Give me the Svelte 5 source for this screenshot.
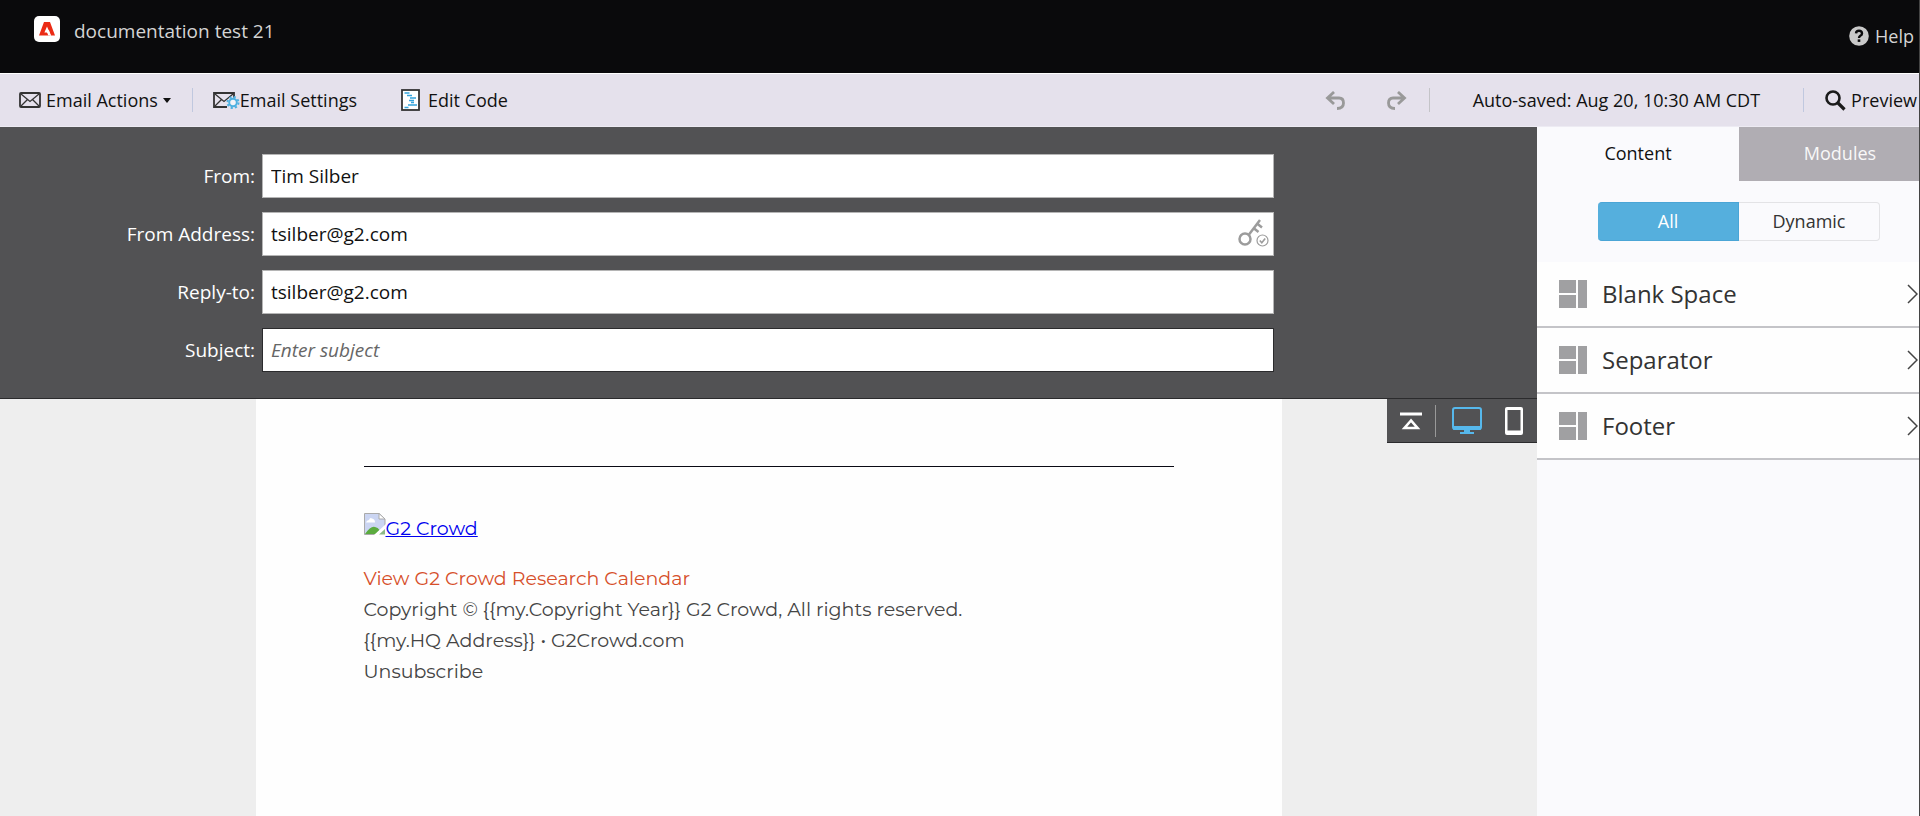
<script>
  let from = $state('Tim Silber');
  let address = $state('tsilber@g2.com');
  let reply = $state('tsilber@g2.com');
  let subject = $state('');
  const modules = ['Blank Space', 'Separator', 'Footer'];
</script>

<div class="app">
  <header class="top">
    <div class="brand">
      <svg width="26" height="26" viewBox="0 0 26 26" aria-hidden="true">
        <rect width="26" height="26" rx="5" fill="#fff" />
        <path fill="#eb2c16" d="M10 6h6l5 13.500h-4L14.700 13.500 12.700 17h2.600l1 2.500H5z" />
        <path fill="#fff" d="M13 10.500l3.800 9h-2.500l-1.200-2.900h-2.700z" />
      </svg>
      <h1>documentation test 21</h1>
    </div>
    <a class="help" href="#help">
      <svg width="20" height="20" viewBox="0 0 20 20" aria-hidden="true">
        <circle cx="10" cy="10" r="9.800" fill="#c9c9c9" />
        <path d="M7 7.400Q7.200 4.800 10 4.800T13 7.400Q13 8.800 11.300 9.800Q10 10.600 10 12" fill="none" stroke="#0a0a0c" stroke-width="2.400" />
        <rect x="8.700" y="13.400" width="2.600" height="2.500" fill="#0a0a0c" />
      </svg>
      Help
    </a>
  </header>

  <nav class="toolbar">
    <button class="tool actions">
      <svg width="22" height="16" viewBox="0 0 22 16" fill="none" stroke="#333" aria-hidden="true">
        <rect x="1" y="1" width="20" height="14" rx="1" stroke-width="1.800" />
        <path d="M2 2l9 7.500L20 2M2 14l6.500-6.500M20 14l-6.500-6.500" stroke-width="1.300" />
      </svg>
      Email Actions
      <svg class="caret" width="8" height="5" viewBox="0 0 8 5" aria-hidden="true"><path d="M0 0h8L4 5z" fill="#111" /></svg>
    </button>
    <span class="rule"></span>
    <button class="tool settings">
      <svg width="27" height="18" viewBox="0 0 27 18" fill="none" aria-hidden="true">
        <g stroke="#333">
          <path d="M14 16H1V2h20v5" stroke-width="1.800" />
          <path d="M2 3l9 7.500L20 3M2 15l6.500-6.500" stroke-width="1.300" />
        </g>
        <circle cx="20" cy="11.500" r="5" fill="#f4f3f8" />
        <circle cx="20" cy="11.500" r="5.500" stroke="#4fb0e0" stroke-width="2" stroke-dasharray="2.160 2.160" />
        <circle cx="20" cy="11.500" r="3.800" stroke="#4fb0e0" stroke-width="2" />
      </svg>
      Email Settings
    </button>
    <button class="tool code">
      <svg width="19" height="22" viewBox="0 0 19 22" fill="none" aria-hidden="true">
        <rect x="1" y="1" width="17" height="20" fill="#fff" stroke="#333" stroke-width="1.800" />
        <path d="M3.500 4h5M6 6.500h5M9 9h6M8 11.500h5M10 13.500h3M7 16h9M3.500 18.500h4" stroke="#35a4dc" stroke-width="1.400" />
      </svg>
      Edit Code
    </button>
    <button class="tool undo" aria-label="Undo">
      <svg width="20" height="19" viewBox="0 0 20 19" fill="none" stroke="#999" stroke-width="2.800" aria-hidden="true">
        <path d="M9 1L2.500 7L9 13M3 7H14Q18.500 7 18.500 12Q18.500 17.500 12 17.500" />
      </svg>
    </button>
    <button class="tool redo" aria-label="Redo">
      <svg width="20" height="19" viewBox="0 0 20 19" fill="none" stroke="#999" stroke-width="2.800" aria-hidden="true">
        <path d="M11 1l6.500 6L11 13M17 7H6Q1.500 7 1.500 12Q1.500 17.500 8 17.500" />
      </svg>
    </button>
    <span class="rule gray"></span>
    <span class="saved">Auto-saved: Aug 20, 10:30 AM CDT</span>
    <span class="rule"></span>
    <button class="tool preview">
      <svg width="21" height="21" viewBox="0 0 21 21" fill="none" stroke="#1b1b1b" aria-hidden="true">
        <circle cx="8" cy="8" r="6.500" stroke-width="2.600" />
        <path d="M12.500 12.500l7 7" stroke-width="3.200" />
      </svg>
      Preview
    </button>
  </nav>

  <div class="body">
    <main class="editor">
      <form class="fields">
        <label for="from">From:</label>
        <input id="from" type="text" bind:value={from} />
        <label for="address">From Address:</label>
        <div class="keyed">
          <input id="address" type="text" bind:value={address} />
          <svg class="key" width="31" height="28" viewBox="0 0 31 28" fill="none" stroke="#9c9c9c" aria-hidden="true">
            <circle cx="7" cy="20" r="5.500" stroke-width="2.500" />
            <path d="M11 15.500L22 1M19 4.500l5 4M15.500 9l5 4" stroke-width="2.500" />
            <circle cx="24.500" cy="21.500" r="5.500" stroke-width="1.200" />
            <path d="M21.800 21.500l2 2.200 3.400-4.200" stroke-width="1.600" />
          </svg>
        </div>
        <label for="reply">Reply-to:</label>
        <input id="reply" type="text" bind:value={reply} />
        <label for="subject">Subject:</label>
        <input id="subject" class="empty" type="text" placeholder="Enter subject" bind:value={subject} />
      </form>

      <section class="canvas">
        <article class="page">
          <hr />
          <p class="logo">
            <a href="#g2"><svg width="22" height="22" viewBox="0 0 22 22" aria-hidden="true">
                <path d="M.500 .500h14.500l6 5.500v7.500L13 21.500H.500z" fill="#cbd5f2" stroke="#aaa" />
                <path d="M15 .500V6h6z" fill="#fff" stroke="#aaa" />
                <path d="M2 9.500Q2.500 7 5 7Q6 4 8 5.500Q11 6 11 9.500z" fill="#fff" />
                <path d="M1 21Q7 12.500 11 14Q14 14.500 15.500 17L12 21z" fill="#5bab3f" />
                <path d="M10 22L22 11v4L14.500 22z" fill="#fff" />
                <path d="M15 21.500h6V16z" fill="#8cb986" />
              </svg><span>G2 Crowd</span></a>
          </p>
          <p>
            <a class="calendar" href="#calendar">View G2 Crowd Research Calendar</a><br />
            Copyright © {'{{my.Copyright Year}}'} G2 Crowd, All rights reserved.<br />
            {'{{my.HQ Address}}'} • G2Crowd.com<br />
            Unsubscribe
          </p>
        </article>
        <div class="views">
          <button aria-label="Collapse header">
            <svg width="22" height="18" viewBox="0 0 22 18" fill="none" stroke="#fff" aria-hidden="true">
              <path d="M0 2h22" stroke-width="3" />
              <path d="M11 8.500L4.500 16h13z" stroke-width="2.600" />
            </svg>
          </button>
          <span class="split"></span>
          <button aria-label="Desktop view">
            <svg width="30" height="27" viewBox="0 0 30 27" aria-hidden="true">
              <rect x="1" y="1" width="28" height="21" rx="2" fill="none" stroke="#56b8ec" stroke-width="2" />
              <path d="M1 19h28v3q0 1-1 1H2q-1 0-1-1zM12 23h6v2h4v2H8v-2h4z" fill="#56b8ec" />
            </svg>
          </button>
          <button aria-label="Mobile view">
            <svg width="18" height="28" viewBox="0 0 18 28" aria-hidden="true">
              <path fill="#fff" fill-rule="evenodd" d="M2 0h14q2 0 2 2v24q0 2-2 2H2q-2 0-2-2V2q0-2 2-2zM2.500 3v20.500h13V3z" />
            </svg>
          </button>
        </div>
      </section>
    </main>

    <aside class="side">
      <div class="tabs">
        <button class="tab active">Content</button>
        <button class="tab">Modules</button>
      </div>
      <div class="filter">
        <button class="active">All</button>
        <button>Dynamic</button>
      </div>
      <ul>
        {#each modules as name}
          <li>
            <button>
              <svg width="28" height="28" viewBox="0 0 28 28" fill="#a0a0a2" aria-hidden="true">
                <path d="M0 0h17v13H0zM0 15h17v13H0zM19 0h9v28h-9z" />
              </svg>
              <span>{name}</span>
              <svg width="11" height="20" viewBox="0 0 11 20" fill="none" stroke="#444" stroke-width="1.500" aria-hidden="true">
                <path d="M1 1l9 9-9 9" />
              </svg>
            </button>
          </li>
        {/each}
      </ul>
    </aside>
  </div>
</div>

<style>
  :global(body) { margin: 0; }
  .app {
    box-sizing: border-box;
    min-height: 100vh;
    display: flex;
    flex-direction: column;
    border-right: 1px solid #444;
    overflow: hidden;
    font-family: "Open Sans", "Noto Sans", sans-serif;
    font-size: 18px;
    line-height: 24px;
    color: #111;
  }
  button {
    font: inherit;
    color: inherit;
    background: none;
    border: 0;
    padding: 0;
    cursor: pointer;
  }
  svg { display: block; flex: none; }
  .top {
    height: 73px;
    box-sizing: border-box;
    display: flex;
    justify-content: space-between;
    align-items: flex-start;
    padding: 16px 5px 0 34px;
    background: #0a0a0c;
    color: #d4d4d4;
  }
  .brand { display: flex; gap: 14px; }
  h1 { margin: 2px 0 0; font-size: 19px; font-weight: 400; line-height: 26px; }
  .help {
    display: flex;
    align-items: center;
    gap: 6px;
    margin-top: 8px;
    color: inherit;
    text-decoration: none;
  }
  .toolbar {
    display: flex;
    align-items: center;
    height: 52px;
    border-top: 1px solid #fff;
    border-bottom: 1px solid #edebf3;
    padding: 0 2px 0 19px;
    background: #e5e1ec;
    white-space: nowrap;
  }
  .tool { display: flex; align-items: center; gap: 5px; }
  .rule { width: 1px; height: 24px; background: #c0c8df; }
  .rule.gray { background: #c4c4c8; }
  .actions { margin-right: 21px; }
  .settings { margin-left: 20px; gap: 0; }
  .code { margin-left: 44px; gap: 8px; }
  .undo { margin-left: auto; }
  .redo { margin: 0 22px 0 42px; }
  .saved { margin: 0 43px; }
  .preview { margin-left: 21px; }
  .body { flex: 1; display: flex; }
  .editor { flex: 1; min-width: 0; display: flex; flex-direction: column; }
  .fields {
    display: grid;
    grid-template-columns: 255px 1fr;
    align-items: center;
    gap: 14px 7px;
    padding: 27px 263px 26px 0;
    border-bottom: 1px solid #2b2b2d;
    background: #525254;
    font-size: 19px;
  }
  label { text-align: right; color: #fff; }
  input {
    box-sizing: border-box;
    display: block;
    width: 100%;
    height: 44px;
    padding: 0 8px;
    border: 1px solid #b5b5b5;
    border-radius: 0;
    background: #fff;
    font: inherit;
    color: #111;
    outline: 0;
  }
  .empty { border-color: #2b2b2d; }
  input::placeholder { color: #666; font-style: italic; opacity: 1; }
  .keyed { position: relative; }
  .key { position: absolute; right: 5px; top: 7px; }
  .canvas { position: relative; flex: 1; display: flex; justify-content: center; background: #eee; }
  .page {
    box-sizing: border-box;
    width: 1026px;
    padding: 67px 108px 0;
    background: #fefefe;
    font-family: Montserrat, Inter, sans-serif;
    font-size: 19px;
    line-height: 31px;
    color: #444;
  }
  hr { margin: 0; border: 0; border-top: 1px solid #0a0a14; }
  .page p { margin: 0; }
  .page .logo { margin: 46px 0 19px; }
  .logo a { display: flex; color: #0000ee; }
  .calendar { color: #d64f2a; text-decoration: none; }
  .views {
    position: absolute;
    right: 0;
    top: 0;
    box-sizing: border-box;
    height: 44px;
    display: flex;
    align-items: center;
    padding: 0 14px 0 13px;
    border-bottom: 1px solid #2b2b2d;
    background: #525254;
  }
  .split { width: 1px; height: 32px; margin: 0 16px 0 13px; background: #999; }
  .views button:last-child { margin-left: 23px; }
  .side { flex: 0 0 382px; min-width: 0; overflow: hidden; background: #fafafd; }
  .tabs { display: flex; width: 404px; }
  .tab { flex: 1; height: 54px; padding-bottom: 2px; background: #b0adb3; color: #f8f8f8; }
  .tab.active { background: #fafafd; color: #111; }
  .filter { display: flex; width: 282px; margin: 21px 0 21px 61px; }
  .filter button {
    flex: 1;
    height: 39px;
    padding-bottom: 2px;
    border: 1px solid #e3e3e6;
    border-left: 0;
    border-radius: 0 4px 4px 0;
    color: #333;
  }
  .filter .active { border-color: #4aa5d6; border-radius: 4px 0 0 4px; background: #55afdd; color: #fff; }
  ul { margin: 0; padding: 0; list-style: none; }
  li { border-bottom: 2px solid #c4c4c8; background: #fefefe; }
  li button {
    width: 100%;
    height: 64px;
    display: flex;
    align-items: center;
    gap: 15px;
    padding: 0 1px 0 22px;
    font-size: 24px;
    color: #333;
    text-align: left;
  }
  li span { flex: 1; }
</style>
